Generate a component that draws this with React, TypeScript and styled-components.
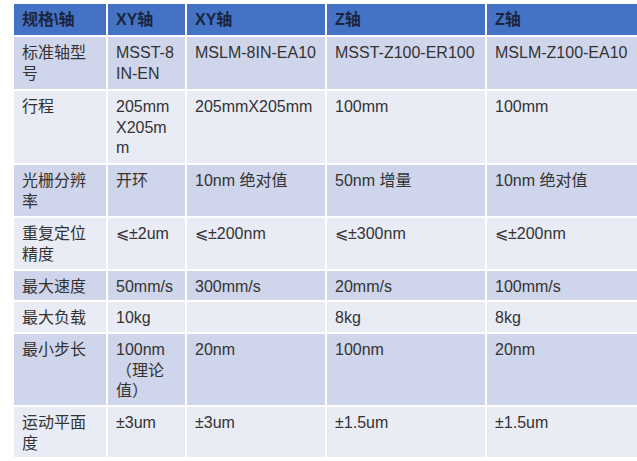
import styled, { createGlobalStyle } from 'styled-components';

const GlobalStyle = createGlobalStyle`
  html, body {
    margin: 0;
    padding: 0;
    background: #ffffff;
    overflow: hidden;
  }
`;

const Page = styled.div`
  width: 637px;
  height: 461px;
  padding: 4px 0 0 14px;
  box-sizing: border-box;
  overflow: hidden;
  font-family: 'Liberation Sans', 'Noto Sans CJK SC', sans-serif;
`;

const Table = styled.div`
  display: grid;
  grid-template-columns: 92px 77px 138px 158px 160px;
  grid-template-rows: 31px 52px 72px 51px 51px 29px 30px 71px 50px;
  gap: 2px;
  width: max-content;
`;

const HeadCell = styled.div`
  background: #4472c4;
  color: #1b2540;
  font-weight: bold;
  font-size: 16px;
  line-height: 20px;
  padding: 0 8px;
  display: flex;
  align-items: center;
`;

const Cell = styled.div<{ $dark: boolean }>`
  background: ${(p) => (p.$dark ? '#cfd5ea' : '#e9ebf5')};
  color: #333333;
  font-size: 16px;
  line-height: 20.5px;
  padding: 6px 8px 0;
  white-space: pre-line;
`;

const headers = ['规格\\轴', 'XY轴', 'XY轴', 'Z轴', 'Z轴'];

const rows: string[][] = [
  ['标准轴型\n号', 'MSST-8\nIN-EN', 'MSLM-8IN-EA10', 'MSST-Z100-ER100', 'MSLM-Z100-EA10'],
  ['行程', '205mm\nX205m\nm', '205mmX205mm', '100mm', '100mm'],
  ['光栅分辨\n率', '开环', '10nm 绝对值', '50nm 增量', '10nm 绝对值'],
  ['重复定位\n精度', '≤±2um', '≤±200nm', '≤±300nm', '≤±200nm'],
  ['最大速度', '50mm/s', '300mm/s', '20mm/s', '100mm/s'],
  ['最大负载', '10kg', '', '8kg', '8kg'],
  ['最小步长', '100nm\n（理论\n值）', '20nm', '100nm', '20nm'],
  ['运动平面\n度', '±3um', '±3um', '±1.5um', '±1.5um'],
];

export default function App() {
  return (
    <Page>
      <GlobalStyle />
      <Table>
        {headers.map((h, i) => (
          <HeadCell key={'h' + i}>{h}</HeadCell>
        ))}
        {rows.map((row, r) =>
          row.map((text, c) => (
            <Cell key={r + '-' + c} $dark={r % 2 === 0}>
              {text.replace(/≤/g, '⩽')}
            </Cell>
          ))
        )}
      </Table>
    </Page>
  );
}
